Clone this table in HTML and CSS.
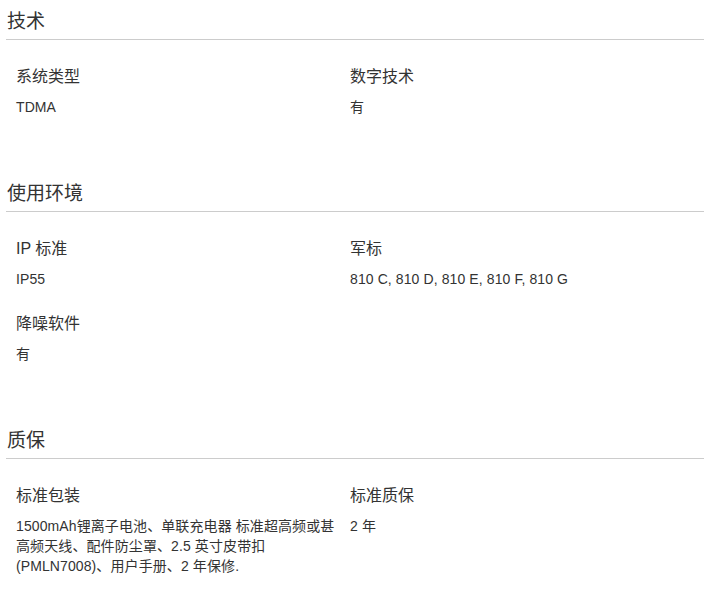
FILE: index.html
```html
<!DOCTYPE html>
<html lang="zh-CN">
<head>
  <meta charset="UTF-8">
  <meta name="viewport" content="width=device-width, initial-scale=1.0">
  <title>规格参数</title>
  <link rel="stylesheet" href="styles.css">
</head>
<body>
  <div class="specs">
    <!-- 技术 -->
    <section class="spec-section">
      <h2 class="spec-title">技术</h2>
      <div class="spec-grid">
        <div class="spec-item">
          <div class="spec-label">系统类型</div>
          <div class="spec-value">TDMA</div>
        </div>
        <div class="spec-item">
          <div class="spec-label">数字技术</div>
          <div class="spec-value">有</div>
        </div>
      </div>
    </section>

    <!-- 使用环境 -->
    <section class="spec-section">
      <h2 class="spec-title">使用环境</h2>
      <div class="spec-grid">
        <div class="spec-item">
          <div class="spec-label">IP 标准</div>
          <div class="spec-value">IP55</div>
        </div>
        <div class="spec-item">
          <div class="spec-label">军标</div>
          <div class="spec-value">810 C, 810 D, 810 E, 810 F, 810 G</div>
        </div>
        <div class="spec-item">
          <div class="spec-label">降噪软件</div>
          <div class="spec-value">有</div>
        </div>
      </div>
    </section>

    <!-- 质保 -->
    <section class="spec-section">
      <h2 class="spec-title">质保</h2>
      <div class="spec-grid">
        <div class="spec-item">
          <div class="spec-label">标准包装</div>
          <div class="spec-value">1500mAh锂离子电池、单联充电器 标准超高频或甚高频天线、配件防尘罩、2.5 英寸皮带扣 (PMLN7008)、用户手册、2 年保修.</div>
        </div>
        <div class="spec-item">
          <div class="spec-label">标准质保</div>
          <div class="spec-value">2 年</div>
        </div>
      </div>
    </section>
  </div>
</body>
</html>
```

FILE: styles.css
```css
/* General Styles */
body {
  margin: 0;
  padding: 0;
  background-color: #ffffff;
  color: #333333;
  font-family: "Liberation Sans", "Noto Sans CJK SC", sans-serif;
}

.specs {
  padding: 9px 4px 0 6px;
}

/* Section */
.spec-section {
  margin-bottom: 64px;
}

.spec-section:last-child {
  margin-bottom: 0;
}

.spec-title {
  margin: 0;
  padding: 0 0 4px 1px;
  font-size: 19px;
  font-weight: normal;
  line-height: 26px;
  color: #333333;
  border-bottom: 1px solid #cccccc;
}

/* Two column grid of label / value pairs */
.spec-grid {
  display: grid;
  grid-template-columns: 334px 1fr;
  row-gap: 24px;
  padding: 26px 10px 0 10px;
}

.spec-item {
  padding-right: 12px;
}

.spec-label {
  font-size: 16px;
  line-height: 22px;
  margin-bottom: 9px;
}

.spec-value {
  font-size: 14px;
  line-height: 20px;
  letter-spacing: 0.1px;
}
```
